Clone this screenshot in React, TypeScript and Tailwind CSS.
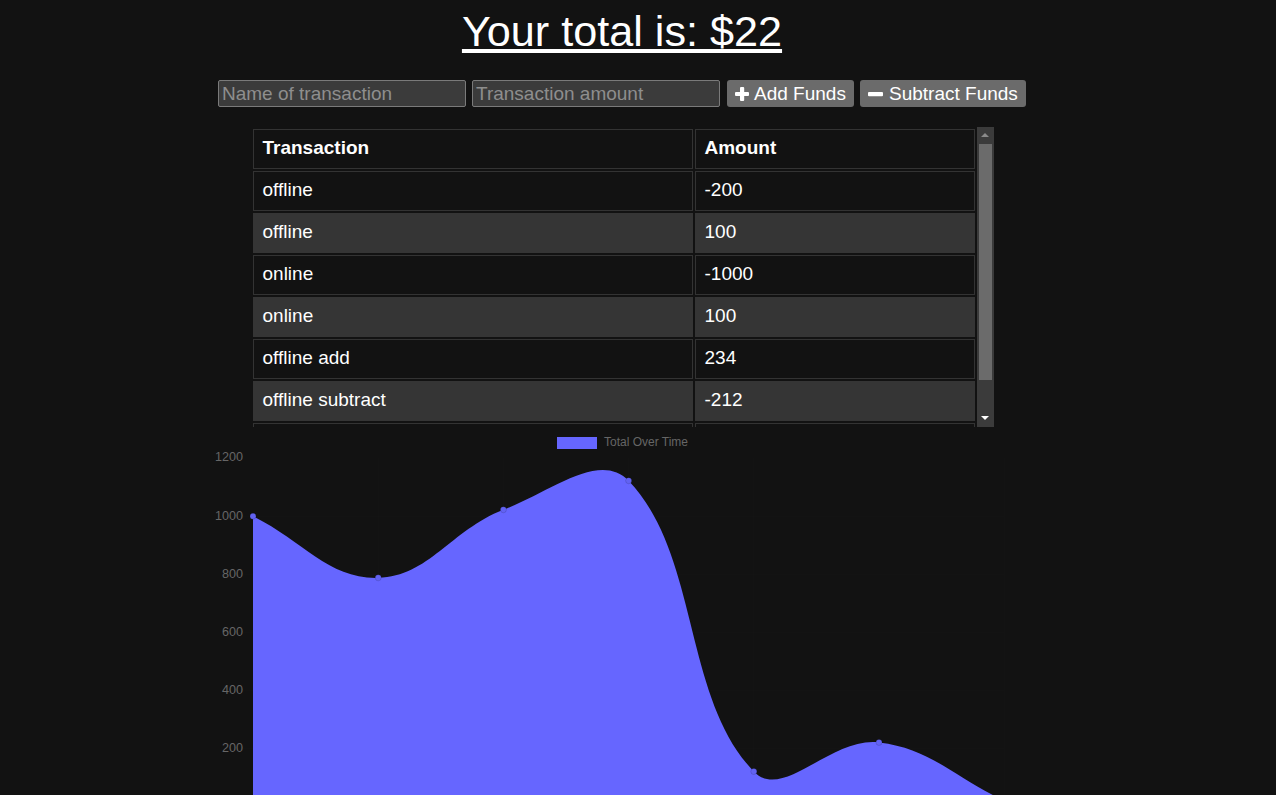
import React from "react";

const FONT = { fontFamily: '"Liberation Sans", Arial, sans-serif' };

const rows: [string, string][] = [
  ["offline", "-200"],
  ["offline", "100"],
  ["online", "-1000"],
  ["online", "100"],
  ["offline add", "234"],
  ["offline subtract", "-212"],
  ["deposit", "1000"],
];

// running totals, oldest first
const totals = [1000, 788, 1022, 1122, 122, 222, 22];

const OFF = 11;
const X0 = 35 + OFF;
const STEP = 125.2;
const ZERO = 377;
const SCALE = 0.2908;
const TOP = ZERO - 1200 * SCALE;

type Pt = { x: number; y: number };

// same spline as chart.js v2 (tension 0.4)
function spline(prev: Pt, cur: Pt, next: Pt, t: number) {
  const d01 = Math.hypot(cur.x - prev.x, cur.y - prev.y);
  const d12 = Math.hypot(next.x - cur.x, next.y - cur.y);
  const s01 = d01 + d12 === 0 ? 0 : d01 / (d01 + d12);
  const s12 = d01 + d12 === 0 ? 0 : d12 / (d01 + d12);
  const fa = t * s01;
  const fb = t * s12;
  return {
    before: { x: cur.x - fa * (next.x - prev.x), y: cur.y - fa * (next.y - prev.y) },
    after: { x: cur.x + fb * (next.x - prev.x), y: cur.y + fb * (next.y - prev.y) },
  };
}

function areaPath(pts: Pt[]) {
  const cps = pts.map((p, i) =>
    spline(pts[i - 1] ?? p, p, pts[i + 1] ?? p, 0.4)
  );
  let d = `M${pts[0].x},${pts[0].y}`;
  for (let i = 0; i < pts.length - 1; i++) {
    const a = cps[i].after;
    const b = cps[i + 1].before;
    d += ` C${a.x},${a.y} ${b.x},${b.y} ${pts[i + 1].x},${pts[i + 1].y}`;
  }
  d += ` L${pts[pts.length - 1].x},${ZERO} L${pts[0].x},${ZERO} Z`;
  return d;
}

function TotalChart() {
  const pts = totals.map((v, i) => ({ x: X0 + i * STEP, y: ZERO - v * SCALE }));
  const ticks = [1200, 1000, 800, 600, 400, 200];
  return (
    <svg width={830} height={400} className="mt-[3px] block shrink-0" style={FONT}>
      {ticks.map((t) => (
        <g key={t}>
          <line
            x1={X0 - 10}
            x2={X0 + 6 * STEP}
            y1={ZERO - t * SCALE}
            y2={ZERO - t * SCALE}
            stroke="rgba(255,255,255,0.012)"
          />
          <text
            x={25 + OFF}
            y={ZERO - t * SCALE}
            textAnchor="end"
            dominantBaseline="middle"
            fontSize={12.6}
            fill="#666"
          >
            {t}
          </text>
        </g>
      ))}
      {pts.map((p, i) => (
        <line
          key={i}
          x1={p.x}
          x2={p.x}
          y1={TOP}
          y2={ZERO + 10}
          stroke="rgba(255,255,255,0.012)"
        />
      ))}
      <path d={areaPath(pts)} fill="#6666ff" />
      {pts.map((p, i) => (
        <circle key={i} cx={p.x} cy={p.y} r={3} fill="#6262f2" stroke="rgba(0,0,0,0.12)" />
      ))}
      <rect x={339 + OFF} y={7} width={40} height={12} fill="#6666ff" />
      <text x={386 + OFF} y={13} dominantBaseline="middle" fontSize={12} fill="#666">
        Total Over Time
      </text>
    </svg>
  );
}

function PlusIcon() {
  return (
    <svg width="14" height="14" viewBox="0 0 14 14" className="shrink-0">
      <rect x="5" y="0" width="4.2" height="14" rx="1" fill="white" />
      <rect x="0" y="4.9" width="14" height="4.2" rx="1" fill="white" />
    </svg>
  );
}

function MinusIcon() {
  return (
    <svg width="15" height="14" viewBox="0 0 15 14" className="shrink-0">
      <rect x="0" y="5" width="15" height="4.2" rx="1" fill="white" />
    </svg>
  );
}

function Scrollbar() {
  return (
    <div className="flex h-full w-[17px] shrink-0 flex-col bg-[#3b3b3b]">
      <div className="flex h-[17px] items-center justify-center">
        <div className="h-0 w-0 border-x-[4px] border-b-[4px] border-x-transparent border-b-[#8a8a8a]" />
      </div>
      <div className="mx-[2px] h-[236px] bg-[#6b6b6b]" />
      <div className="flex-1" />
      <div className="flex h-[17px] items-center justify-center">
        <div className="h-0 w-0 border-x-[4px] border-t-[4px] border-x-transparent border-t-white" />
      </div>
    </div>
  );
}

function TransactionTable() {
  return (
    <div className="mt-[20px] flex h-[300px] w-[743px] shrink-0 overflow-hidden">
      <div className="flex w-[726px] shrink-0 flex-col gap-[2px] p-[2px] text-[19px] text-white">
        <div className="flex gap-[2px] font-bold">
          <div className="flex h-[40px] w-[440px] items-center border border-[#333] pl-[9px]">
            Transaction
          </div>
          <div className="flex h-[40px] w-[280px] items-center border border-[#333] pl-[9px]">
            Amount
          </div>
        </div>
        {rows.map(([name, amount], i) => {
          const cell =
            i % 2 === 1
              ? "flex h-[40px] shrink-0 items-center border border-[#353535] bg-[#353535] pl-[9px]"
              : "flex h-[40px] shrink-0 items-center border border-[#333] pl-[9px]";
          return (
            <div key={i} className="flex gap-[2px]">
              <div className={`${cell} w-[440px]`}>{name}</div>
              <div className={`${cell} w-[280px]`}>{amount}</div>
            </div>
          );
        })}
      </div>
      <Scrollbar />
    </div>
  );
}

export default function App() {
  return (
    <div className="h-[795px] w-full overflow-hidden bg-[#121212]" style={FONT}>
      <div className="flex w-[1244px] flex-col items-center pt-[7px]">
        <h1 className="text-[43.2px] font-normal leading-[49.6px] text-white underline">
          Your total is: $22
        </h1>
        <div className="mt-[23px] flex h-[27px] items-stretch gap-[6px] text-[19px] leading-[22px]">
          <input
            placeholder="Name of transaction"
            className="w-[248px] rounded-[2px] border border-[#7a7a7a] bg-[#3b3b3b] px-[3px] pt-[1px] text-white placeholder:text-[#8e8e8e] outline-none"
          />
          <input
            placeholder="Transaction amount"
            className="w-[248px] rounded-[2px] border border-[#7a7a7a] bg-[#3b3b3b] px-[3px] pt-[1px] text-white placeholder:text-[#8e8e8e] outline-none"
          />
          <button className="ml-[1px] flex w-[127px] items-center gap-[5px] rounded-[3px] bg-[#6b6b6b] pl-[8px] pt-[1px] text-white">
            <PlusIcon />
            Add Funds
          </button>
          <button className="flex w-[166px] items-center gap-[6px] rounded-[3px] bg-[#6b6b6b] pl-[8px] pt-[1px] text-white">
            <MinusIcon />
            Subtract Funds
          </button>
        </div>
        <TransactionTable />
        <TotalChart />
      </div>
    </div>
  );
}
